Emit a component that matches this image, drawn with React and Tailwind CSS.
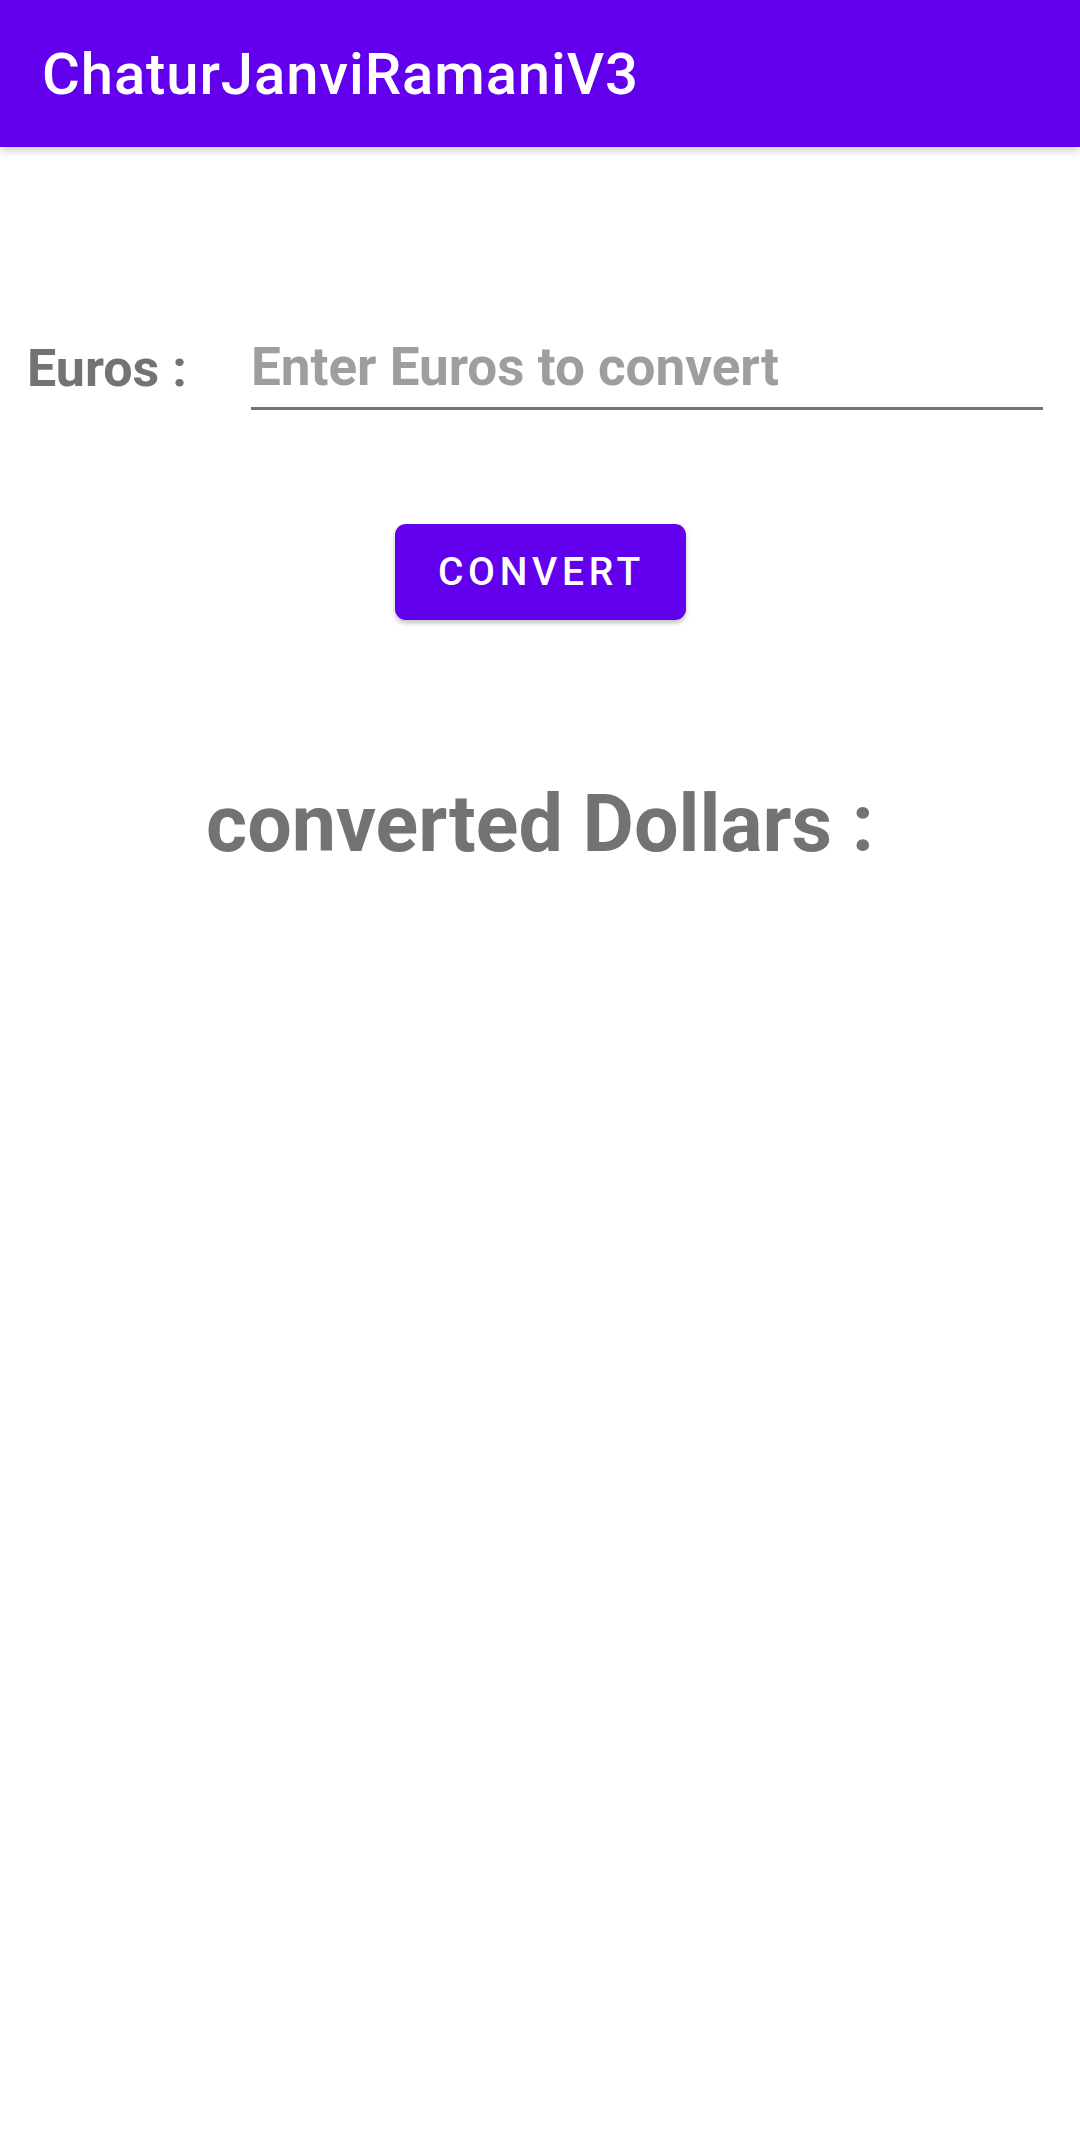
import React from "react";

export default function App() {
  return (
    <div className="min-h-[2131px] w-[1080px] bg-white font-['Roboto',sans-serif]">
      <header className="h-[147px] bg-[#6200ee] flex items-center pl-[42px] shadow-[0_4px_8px_rgba(0,0,0,0.18)]">
        <h1 className="text-white text-[58px] font-medium leading-none tracking-[0.9px]">
          ChaturJanviRamaniV3
        </h1>
      </header>

      <main className="flex flex-col">
        <div className="flex items-end pt-[189px] pl-[27px] pr-[37px]">
          <label className="w-[224px] text-[52px] font-bold text-[#737373] leading-none pb-[15px]">
            Euros :
          </label>
          <input
            type="text"
            placeholder="Enter Euros to convert"
            className="flex-1 text-[53px] font-bold text-[#737373] placeholder:text-[#9e9e9e] leading-none pb-[9px] border-b-[3px] border-[#757575] outline-none bg-transparent"
          />
        </div>

        <div className="flex justify-center pt-[114px]">
          <button className="w-[291px] h-[96px] rounded-[11px] bg-[#6200ee] text-white text-[39px] font-medium tracking-[4.7px] pl-[3px] shadow-[0_3px_5px_rgba(0,0,0,0.25)]">
            CONVERT
          </button>
        </div>

        <p className="text-center pt-[165px] text-[79px] font-bold text-[#737373] leading-none">
          converted Dollars :
        </p>
      </main>
    </div>
  );
}
